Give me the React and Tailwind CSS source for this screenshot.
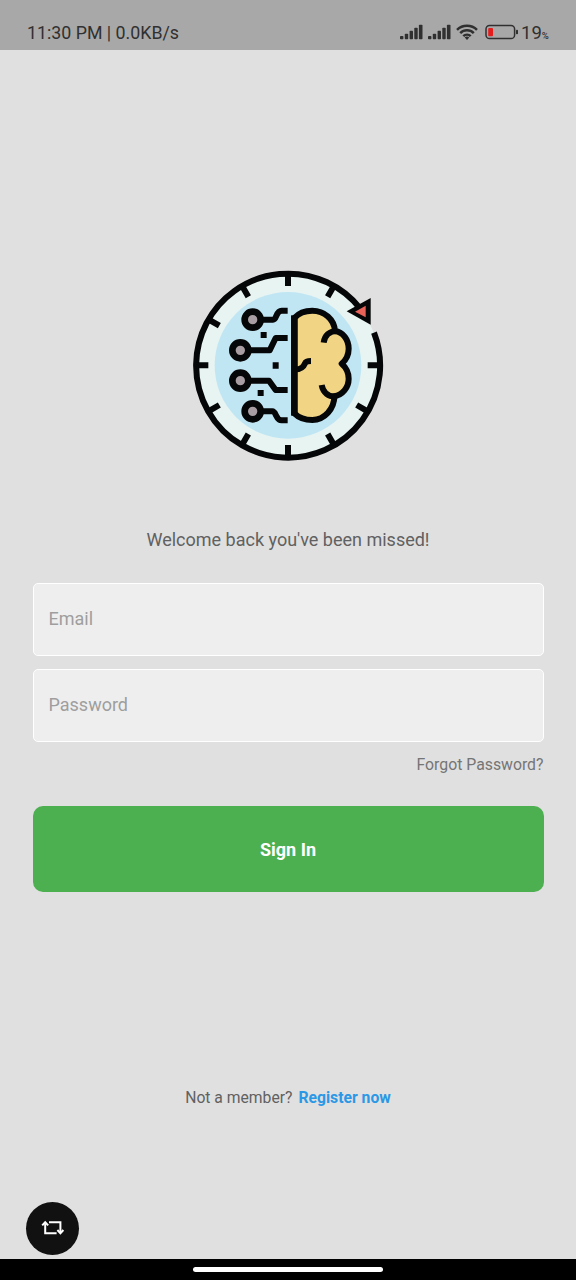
import React from "react";

function Signal() {
  return (
    <svg width="23" height="16" viewBox="0 0 23 16" fill="#303030" className="shrink-0">
      <rect x="0" y="12" width="3.4" height="3.2" rx="0.8" />
      <rect x="4.8" y="9.8" width="3.4" height="5.4" rx="0.8" />
      <rect x="9.6" y="6.8" width="3.4" height="8.4" rx="0.8" />
      <rect x="14.3" y="3.8" width="3.4" height="11.4" rx="0.8" />
      <rect x="18.9" y="0.8" width="3.6" height="14.4" rx="0.8" />
    </svg>
  );
}

function Wifi() {
  return (
    <svg width="22" height="16" viewBox="0 0 22 16" fill="none" stroke="#303030" strokeWidth="2.5" className="shrink-0">
      <path d="M1 5.8 C6.5 .3 15.5 .3 21 5.8" />
      <path d="M4.2 9.1 C8 5.3 14 5.3 17.8 9.1" />
      <path d="M7.3 12.2 C9.4 10.1 12.6 10.1 14.7 12.2" />
      <path d="M8.7 13.4 Q11 11.6 13.3 13.4 L11 15.9 Z" fill="#303030" stroke="none" />
    </svg>
  );
}

function Battery() {
  return (
    <svg width="34" height="16" viewBox="0 0 34 16" className="shrink-0">
      <rect x="1" y="1.5" width="28.6" height="13" rx="3.6" fill="none" stroke="#303030" strokeWidth="1.5" />
      <rect x="3.2" y="4" width="4.8" height="8.2" rx="1" fill="#e51c1c" />
      <rect x="31" y="5.8" width="2" height="4.4" rx="0.8" fill="#303030" />
    </svg>
  );
}

function StatusBar() {
  return (
    <header className="flex h-[50px] shrink-0 items-start bg-[#a8a8a8] pl-[27px] pt-[21px] text-[17.8px] leading-6 text-[#303030]">
      <span className="w-[373px] whitespace-nowrap font-[450]">11:30 PM | 0.0KB/s</span>
      <div className="flex pt-[3px]">
        <Signal />
        <span className="w-[5px]" />
        <Signal />
        <span className="w-[5px]" />
        <Wifi />
        <span className="w-[7px]" />
        <Battery />
      </div>
      <span className="ml-[2px] flex items-baseline font-normal">
        <span className="text-[18.5px]">19</span>
        <span className="text-[9.5px] font-medium">%</span>
      </span>
    </header>
  );
}

function Logo() {
  return (
    <svg width="206" height="206" viewBox="0 0 618 618" fill="none" stroke="#050607" strokeWidth="18" className="blur-[0.6px]">
      <circle cx="309" cy="310" r="275" fill="#e7f4f2" stroke="none" />
      <circle cx="309" cy="310" r="220" fill="#c1e6f3" stroke="none" />
      <path d="M567 212 A276 276 0 1 1 526 140" />
      <path d="M309 34V72M309 549V586M33 310H70M548 310H585" />
      <path d="M171 71L190 104M447 71L428 104M70 172L103 191M70 448L103 429M171 549L190 516M447 549L428 516M548 448L515 429" />
      <path d="M485 148L557 108V188Z" fill="#050607" stroke="none" />
      <path d="M510 149L542 131V166Z" fill="#e8625a" stroke="none" />
      <g fill="#a79da2">
        <circle cx="203" cy="173" r="24" strokeWidth="20" />
        <circle cx="166" cy="265" r="24" strokeWidth="20" />
        <circle cx="166" cy="356" r="24" strokeWidth="20" />
        <circle cx="203" cy="448" r="24" strokeWidth="20" />
      </g>
      <g strokeLinejoin="round">
        <path d="M232 173H264C276 173 272 146 290 146H308M195 265H254L272 228H308M195 356H252L272 384H308M232 448H262C274 448 272 475 290 475H308" />
      </g>
      <path d="M227 210H245V228H227ZM263 301H281V320H263ZM218 384H236V402H218Z" fill="#050607" stroke="none" />
      <path
        d="M328 168C342 152 362 146 382 146C418 146 448 172 450 207C474 210 491 233 491 260C491 278 483 294 470 305C483 316 491 332 491 350C491 377 472 399 448 403C448 440 419 474 382 474C360 474 341 467 328 454Z"
        fill="#f1d484"
        strokeLinejoin="round"
      />
      <path d="M328 160V461" strokeWidth="20" />
      <path d="M330 322C350 322 356 314 360 304Q363 297 378 297M456 207C434 207 419 220 416 242M456 403C430 406 414 391 410 369" />
    </svg>
  );
}

function Field({ type, label }) {
  return (
    <input
      type={type}
      placeholder={label}
      aria-label={label}
      className="h-[73px] w-full rounded-[5px] border-[1.5px] border-white bg-[#eeeeee] px-[15px] pb-[2px] text-[18px] outline-none placeholder:text-[#9e9e9e]"
    />
  );
}

function RepeatIcon() {
  return (
    <svg width="24" height="16" viewBox="0 0 24 16" fill="none" stroke="#ffffff" strokeWidth="2">
      <path d="M8 2.2H19.4V12M15.6 13.2H4.2V3.5" />
      <path d="M1.2 5.4L4.2 2.2L7.2 5.4M16.4 10L19.4 13.2L22.4 10" />
    </svg>
  );
}

export default function App() {
  return (
    <div className="flex h-[1280px] w-[576px] flex-col overflow-hidden bg-[#e0e0e0] font-['Roboto',sans-serif]">
      <StatusBar />
      <main className="flex flex-1 flex-col px-[32.5px] pt-[212px]">
        <div className="flex justify-center">
          <Logo />
        </div>
        <p className="mt-[60px] text-center text-[18px] leading-6 text-[#616161]">
          Welcome back you've been missed!
        </p>
        <form className="mt-[31px] flex flex-col gap-[13px]">
          <Field type="email" label="Email" />
          <Field type="password" label="Password" />
        </form>
        <a className="mt-[13px] text-right text-[15.8px] leading-5 text-[#757575]">Forgot Password?</a>
        <button className="mt-[31px] h-[86px] shrink-0 rounded-[10px] bg-[#4caf50] text-[18px] font-bold text-white">
          Sign In
        </button>
        <p className="mt-[196px] flex justify-center gap-[6px] text-[15.7px] leading-5 text-[#616161]">
          <span>Not a member?</span>
          <a className="font-bold text-[#2b98e6]">Register now</a>
        </p>
        <button className="-ml-[6.5px] mt-[94px] flex size-[52.5px] items-center justify-center rounded-full bg-[#111111] pl-px">
          <RepeatIcon />
        </button>
      </main>
      <footer className="flex h-[21px] shrink-0 justify-center bg-black pt-[8px]">
        <div className="h-[5px] w-[190px] rounded-full bg-white" />
      </footer>
    </div>
  );
}
